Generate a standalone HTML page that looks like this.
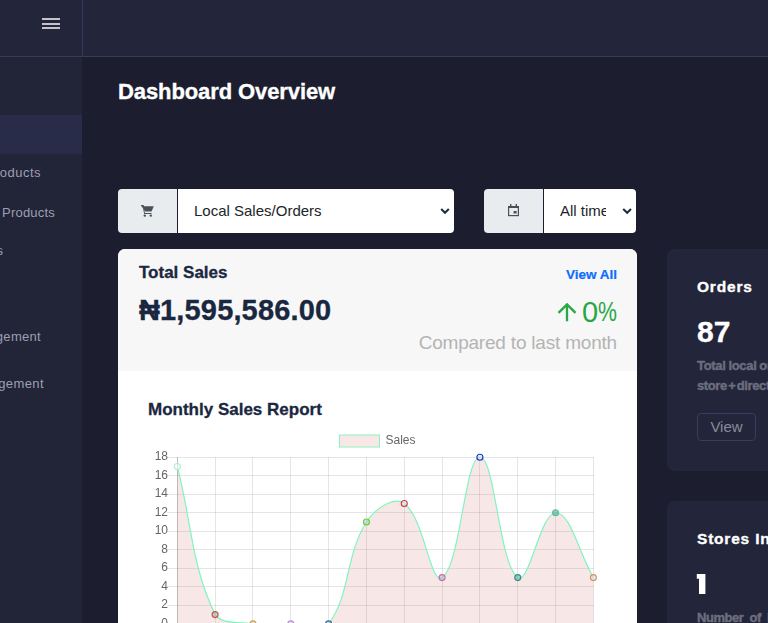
<!DOCTYPE html>
<html><head><meta charset="utf-8">
<style>
*{margin:0;padding:0;box-sizing:border-box}
html,body{width:768px;height:623px;overflow:hidden;background:#1c1d2e;font-family:"Liberation Sans",sans-serif}
.a{position:absolute;white-space:nowrap}
#hdr{position:absolute;left:0;top:0;width:768px;height:57px;background:#23263a;border-bottom:1px solid #383a5c}
#hdr .vl{position:absolute;left:82px;top:0;width:1px;height:56px;background:#34365a}
#side{position:absolute;left:0;top:57px;width:82px;height:566px;background:#222437}
#act{position:absolute;left:0;top:115px;width:82px;height:39px;background:#292c48}
.ham{position:absolute;left:42px;width:18px;height:2px;background:#c4c4c8}
.st{font-size:13px;line-height:13px;color:#9d9fb2}
.t{color:#fff;font-weight:bold;-webkit-text-stroke:0.35px #fff}
.sel{position:absolute;top:189px;height:44px;background:#fff;border-radius:0 4px 4px 0}
.ib{position:absolute;top:189px;height:44px;width:60px;background:#e9ecef;border-radius:4px 0 0 4px;border-right:1px solid #1c1d2e}
.card{position:absolute;background:#23253a;border-radius:7px}
</style></head><body>
<div id="hdr"><div class="vl"></div>
<div class="ham" style="top:18px"></div><div class="ham" style="top:23px"></div><div class="ham" style="top:27px"></div>
</div>
<div id="side"></div>
<div id="act"></div>
<div class="a st" style="right:727px;top:166px;letter-spacing:0.5px">Local Products</div>
<div class="a st" style="right:713px;top:206px;letter-spacing:0.2px">Direct Products</div>
<div class="a st" style="right:765px;top:244px">Orders</div>
<div class="a st" style="right:727px;top:330px;letter-spacing:0.3px">Store Management</div>
<div class="a st" style="right:724px;top:377px;letter-spacing:0.4px">User Management</div>

<div class="a t" style="left:118px;top:81px;font-size:22px;line-height:22px;letter-spacing:-0.1px">Dashboard Overview</div>

<!-- select group 1 -->
<div class="ib" style="left:118px"></div>
<div class="sel" style="left:178px;width:276px"></div>
<div class="a" style="left:194px;top:203px;font-size:15px;line-height:15px;color:#212529">Local Sales/Orders</div>
<!-- select group 2 -->
<div class="ib" style="left:484px"></div>
<div class="sel" style="left:544px;width:92px"></div>
<div class="a" style="left:560px;top:203px;font-size:15px;line-height:15px;color:#212529;width:46px;overflow:hidden">All time</div>

<svg class="a" style="left:0;top:0" width="768" height="260">
<g fill="#495057">
<path d="M141 205h2.4l0.6 1.2h9.8l-2.3 5.3h-6.6z"/>
<rect x="141" y="205" width="2.2" height="1.3"/>
<path d="M142.4 205.5l2.6 7.5h6.5v1h-7.3z" />
<circle cx="144.8" cy="215.6" r="1.2"/><circle cx="150.8" cy="215.6" r="1.2"/>
</g>
<g fill="none" stroke="#495057">
<rect x="508.6" y="206.6" width="9.8" height="9" stroke-width="1.2"/>
</g>
<g fill="#495057">
<rect x="508" y="206" width="11" height="2"/>
<rect x="510" y="204" width="1.4" height="2.5"/><rect x="515.6" y="204" width="1.4" height="2.5"/>
<rect x="513.6" y="211" width="3" height="2.5"/>
</g>
<g fill="none" stroke="#1e2a40" stroke-width="2">
<path d="M441.2 209l3.8 3.8 3.8-3.8"/>
<path d="M623.2 209l4 3.8 3.8-3.8"/>
</g>
</svg>
<!-- total sales card -->
<div class="a" style="left:118px;top:249px;width:519px;height:374px;background:#fff;border-radius:7px 7px 0 0;overflow:hidden">
  <div style="position:absolute;left:0;top:0;width:519px;height:122px;background:#f7f7f7"></div>
</div>
<div class="a" style="left:139px;top:264px;font-size:17px;line-height:17px;font-weight:bold;color:#1a2740;-webkit-text-stroke:0.3px #1a2740">Total Sales</div>
<div class="a" style="left:139px;top:296px;font-size:29px;line-height:29px;font-weight:bold;letter-spacing:0.15px;color:#1a2740;-webkit-text-stroke:0.3px #1a2740">&#8358;1,595,586.00</div>
<div class="a" style="right:151px;top:268px;font-size:13.5px;line-height:14px;font-weight:bold;letter-spacing:0px;color:#0d6efd;-webkit-text-stroke:0.2px #0d6efd">View All</div>
<div class="a" style="left:582px;top:298px;font-size:29px;line-height:29px;color:#28a745">0</div><div class="a" style="left:598px;top:298px;font-size:28px;line-height:28px;color:#28a745;transform:scaleX(0.76);transform-origin:0 0">%</div>
<svg class="a" style="left:553px;top:298px" width="28" height="28" viewBox="0 0 24 24"><path fill="#28a745" d="M4 12l1.41 1.41L11 7.83V20h2V7.83l5.58 5.59L20 12l-8-8-8 8z"/></svg>
<div class="a" style="right:151px;top:333px;font-size:19px;line-height:19px;letter-spacing:-0.2px;color:#b4b4b4">Compared to last month</div>
<div class="a" style="left:148px;top:401px;font-size:17px;line-height:17px;font-weight:bold;color:#1a2740;-webkit-text-stroke:0.3px #1a2740">Monthly Sales Report</div>

<!-- right cards -->
<div class="card" style="left:667px;top:249px;width:130px;height:222px"></div>
<div class="a t" style="left:697px;top:279px;font-size:15.5px;line-height:16px;letter-spacing:0.8px">Orders</div>
<div class="a t" style="left:697px;top:317px;font-size:30px;line-height:30px">87</div>
<div class="a" style="left:697px;top:356px;font-size:13px;line-height:20px;font-weight:bold;letter-spacing:-0.3px;word-spacing:-1px;color:#6c6e7e;-webkit-text-stroke:0.4px #6c6e7e"><span style="word-spacing:-0.5px;letter-spacing:-0.3px">Total local orders</span><br><span style="word-spacing:-1.8px;letter-spacing:-0.4px">store + direct</span></div>
<div class="a" style="left:697px;top:413px;width:59px;height:28px;border:1px solid #393b60;border-radius:4px;color:#8a8c9b;font-size:15px;line-height:26px;text-align:center">View</div>

<div class="card" style="left:667px;top:501px;width:130px;height:200px"></div>
<div class="a t" style="left:697px;top:531px;font-size:15.5px;line-height:16px;letter-spacing:0.8px">Stores Inventory</div>
<svg class="a" style="left:690px;top:570px" width="20" height="28"><path fill="#fff" d="M6.8 4h8.6v20h-6.4v-15.2h-2.2z"/></svg>
<div class="a" style="left:697px;top:608px;font-size:13px;line-height:20px;font-weight:bold;letter-spacing:-0.45px;word-spacing:3px;color:#6c6e7e;-webkit-text-stroke:0.4px #6c6e7e">Number of items</div>

<!-- chart -->
<svg class="a" style="left:0;top:0;will-change:transform" width="768" height="623" id="chart"><g stroke="rgba(0,0,0,0.1)" stroke-width="1"><line x1="167" y1="457.5" x2="594.0" y2="457.5"/><line x1="167" y1="475.5" x2="594.0" y2="475.5"/><line x1="167" y1="494.5" x2="594.0" y2="494.5"/><line x1="167" y1="512.5" x2="594.0" y2="512.5"/><line x1="167" y1="531.5" x2="594.0" y2="531.5"/><line x1="167" y1="549.5" x2="594.0" y2="549.5"/><line x1="167" y1="568.5" x2="594.0" y2="568.5"/><line x1="167" y1="586.5" x2="594.0" y2="586.5"/><line x1="167" y1="605.5" x2="594.0" y2="605.5"/><line x1="167" y1="623.5" x2="594.0" y2="623.5" stroke="rgba(0,0,0,0.25)"/><line x1="177.5" y1="457.2" x2="177.5" y2="633" stroke="rgba(0,0,0,0.25)"/><line x1="215.5" y1="457.2" x2="215.5" y2="633"/><line x1="252.5" y1="457.2" x2="252.5" y2="633"/><line x1="290.5" y1="457.2" x2="290.5" y2="633"/><line x1="328.5" y1="457.2" x2="328.5" y2="633"/><line x1="366.5" y1="457.2" x2="366.5" y2="633"/><line x1="404.5" y1="457.2" x2="404.5" y2="633"/><line x1="442.5" y1="457.2" x2="442.5" y2="633"/><line x1="479.5" y1="457.2" x2="479.5" y2="633"/><line x1="517.5" y1="457.2" x2="517.5" y2="633"/><line x1="555.5" y1="457.2" x2="555.5" y2="633"/><line x1="593.5" y1="457.2" x2="593.5" y2="633"/></g><g style="font-family:&quot;Liberation Sans&quot;,sans-serif" font-size="12" fill="#666" text-anchor="end"><text x="168.0" y="460.20">18</text><text x="168.0" y="478.72">16</text><text x="168.0" y="497.24">14</text><text x="168.0" y="515.76">12</text><text x="168.0" y="534.28">10</text><text x="168.0" y="552.80">8</text><text x="168.0" y="571.32">6</text><text x="168.0" y="589.84">4</text><text x="168.0" y="608.36">2</text><text x="168.0" y="626.88">0</text></g><rect x="339.5" y="435" width="40" height="12" fill="rgba(210,120,110,0.17)" stroke="#8ef2c0" stroke-width="1"/><text x="385.5" y="444.3" style="font-family:&quot;Liberation Sans&quot;,sans-serif" font-size="12" fill="#666">Sales</text><path d="M177.30 466.46 C192.43 525.72 191.01 564.43 215.13 614.62 C221.27 623.88 237.60 622.00 252.95 623.88 C267.87 623.88 275.65 623.88 290.78 623.88 C305.91 623.88 320.79 623.88 328.61 623.88 C351.06 593.66 344.63 556.72 366.44 522.02 C374.89 508.57 394.09 496.03 404.26 503.50 C424.35 518.25 430.07 584.94 442.09 577.58 C460.33 566.42 464.79 457.20 479.92 457.20 C495.05 457.20 498.77 563.64 517.75 577.58 C529.03 585.87 540.44 512.76 555.57 512.76 C570.70 512.76 578.27 551.65 593.40 577.58 L593.40 623.88 L177.30 623.88 Z" fill="rgba(210,120,110,0.17)" stroke="none"/><path d="M177.30 466.46 C192.43 525.72 191.01 564.43 215.13 614.62 C221.27 623.88 237.60 622.00 252.95 623.88 C267.87 623.88 275.65 623.88 290.78 623.88 C305.91 623.88 320.79 623.88 328.61 623.88 C351.06 593.66 344.63 556.72 366.44 522.02 C374.89 508.57 394.09 496.03 404.26 503.50 C424.35 518.25 430.07 584.94 442.09 577.58 C460.33 566.42 464.79 457.20 479.92 457.20 C495.05 457.20 498.77 563.64 517.75 577.58 C529.03 585.87 540.44 512.76 555.57 512.76 C570.70 512.76 578.27 551.65 593.40 577.58" fill="none" stroke="#80f4c0" stroke-width="1.2"/><circle cx="177.30" cy="466.46" r="3" fill="rgba(255,255,255,0.5)" stroke="#a8f0c8" stroke-width="1.1"/><circle cx="215.13" cy="614.62" r="3" fill="rgba(150,180,210,0.6)" stroke="#c8562c" stroke-width="1.1"/><circle cx="252.95" cy="623.88" r="3" fill="rgba(210,200,225,0.5)" stroke="#d4a03c" stroke-width="1.1"/><circle cx="290.78" cy="623.88" r="3" fill="rgba(200,200,240,0.5)" stroke="#c08ad0" stroke-width="1.1"/><circle cx="328.61" cy="623.88" r="3" fill="rgba(190,170,235,0.5)" stroke="#2a6e92" stroke-width="1.1"/><circle cx="366.44" cy="522.02" r="3" fill="rgba(180,200,225,0.5)" stroke="#62d21e" stroke-width="1.1"/><circle cx="404.26" cy="503.50" r="3" fill="rgba(220,235,240,0.5)" stroke="#d03444" stroke-width="1.1"/><circle cx="442.09" cy="577.58" r="3" fill="rgba(180,170,210,0.5)" stroke="#c46ea2" stroke-width="1.1"/><circle cx="479.92" cy="457.20" r="3" fill="rgba(220,225,245,0.4)" stroke="#1e2ed0" stroke-width="1.1"/><circle cx="517.75" cy="577.58" r="3" fill="rgba(120,170,170,0.6)" stroke="#2e8e80" stroke-width="1.1"/><circle cx="555.57" cy="512.76" r="3" fill="rgba(100,160,160,0.6)" stroke="#52c2a2" stroke-width="1.1"/><circle cx="593.40" cy="577.58" r="3" fill="rgba(225,215,235,0.5)" stroke="#d0905e" stroke-width="1.1"/></svg>
</body></html>
